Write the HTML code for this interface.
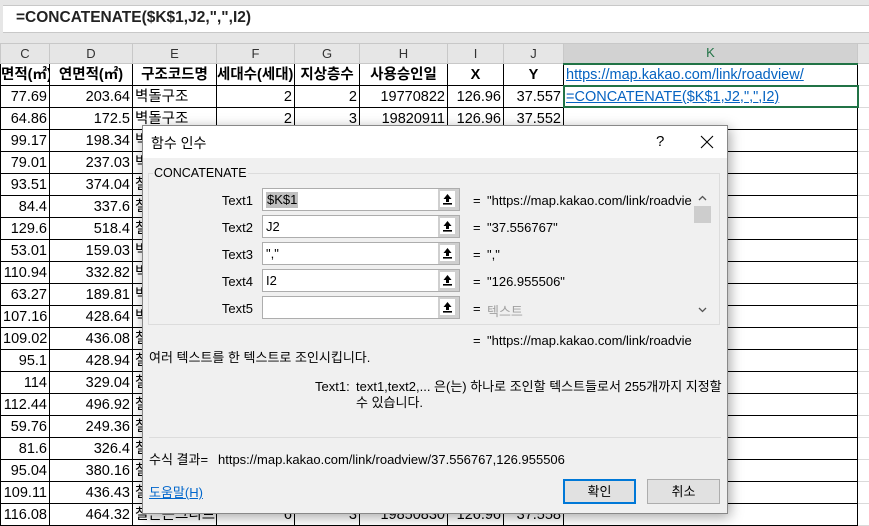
<!DOCTYPE html>
<html><head><meta charset="utf-8"><style>
*{margin:0;padding:0;box-sizing:border-box}
body{width:869px;height:521px;overflow:hidden;background:#fff;position:relative;font-family:"Liberation Sans","Noto Sans CJK KR",sans-serif;color:#000}
.abs{position:absolute}
#fbar{left:0;top:0;width:869px;height:43px;background:#e6e6e6}
#fbox{left:3px;top:5px;width:866px;height:28px;background:#fff;border-top:1px solid #c8c8c8;border-bottom:1px solid #c8c8c8}
#ftxt{left:16px;top:9px;font-size:15.5px;font-weight:bold;color:#222}
table{position:absolute;left:0;top:43px;width:869px;border-collapse:collapse;table-layout:fixed}
td{height:22px;font-size:14.5px;white-space:nowrap;overflow:hidden;padding:0 2px;border:1px solid #000;line-height:20px}
tr.h td{height:20px;line-height:18px;background:#e6e6e6;border:1px solid #c8c8c8;text-align:center;font-size:13px;color:#333}
tr.h td.k{background:#d2d2d2;border-bottom:2px solid #217346;color:#217346}
td.r{text-align:right}
td.b{font-weight:bold;text-align:center}
td.g{border:1px solid #dadada;border-left:1px solid #000}
#sel{left:563px;top:85px;width:296px;height:23px;border:2px solid #217346}
#dlg{left:142px;top:125px;width:586px;height:389px;background:#f0f0f0;border:1px solid #888;box-shadow:2px 3px 12px rgba(0,0,0,.35)}
#title{left:0;top:0;width:584px;height:32px;background:#fff}
.t{position:absolute;font-size:13px;white-space:nowrap;line-height:16px}
.lab{position:absolute;font-size:13px;width:60px;text-align:right;left:50px}
.inp{position:absolute;left:119px;width:198px;height:23px;background:#fff;border:1px solid #adadad}
.btn{position:absolute;right:0;top:0;width:21px;height:21px;background:#cfcfcf;padding:2px}
.btn div{width:15px;height:16px;background:#fff}
.eq{position:absolute;left:330px;font-size:13px}
.val{position:absolute;left:344px;font-size:13px;white-space:nowrap}
</style></head><body>
<div class="abs" id="fbar"></div>
<div class="abs" id="fbox"></div>
<div class="abs" id="ftxt">=CONCATENATE($K$1,J2,",",I2)</div>
<table>
<colgroup><col style="width:49px"><col style="width:83px"><col style="width:84px"><col style="width:78px"><col style="width:65px"><col style="width:88px"><col style="width:56px"><col style="width:60px"><col style="width:294px"><col style="width:12px"></colgroup>
<tr class="h"><td>C</td><td>D</td><td>E</td><td>F</td><td>G</td><td>H</td><td>I</td><td>J</td><td class="k">K</td><td></td></tr>
<tr><td class="b" style="text-align:right;padding:0">면적(㎡)</td><td class="b">연면적(㎡)</td><td class="b">구조코드명</td><td class="b" style="text-align:left;padding:0">세대수(세대)</td><td class="b">지상층수</td><td class="b">사용승인일</td><td class="b">X</td><td class="b">Y</td><td style="color:#0563c1;text-decoration:underline">https://map.kakao.com/link/roadview/</td><td class="g"></td></tr>
<tr><td class="r">77.69</td><td class="r">203.64</td><td>벽돌구조</td><td class="r">2</td><td class="r">2</td><td class="r">19770822</td><td class="r">126.96</td><td class="r">37.557</td><td style="color:#0563c1;text-decoration:underline">=CONCATENATE($K$1,J2,",",I2)</td><td class="g"></td></tr>
<tr><td class="r">64.86</td><td class="r">172.5</td><td>벽돌구조</td><td class="r">2</td><td class="r">3</td><td class="r">19820911</td><td class="r">126.96</td><td class="r">37.552</td><td></td><td class="g"></td></tr>
<tr><td class="r">99.17</td><td class="r">198.34</td><td>벽돌구조</td><td></td><td></td><td></td><td></td><td></td><td></td><td class="g"></td></tr>
<tr><td class="r">79.01</td><td class="r">237.03</td><td>벽돌구조</td><td></td><td></td><td></td><td></td><td></td><td></td><td class="g"></td></tr>
<tr><td class="r">93.51</td><td class="r">374.04</td><td>철근콘크리트</td><td></td><td></td><td></td><td></td><td></td><td></td><td class="g"></td></tr>
<tr><td class="r">84.4</td><td class="r">337.6</td><td>철근콘크리트</td><td></td><td></td><td></td><td></td><td></td><td></td><td class="g"></td></tr>
<tr><td class="r">129.6</td><td class="r">518.4</td><td>철근콘크리트</td><td></td><td></td><td></td><td></td><td></td><td></td><td class="g"></td></tr>
<tr><td class="r">53.01</td><td class="r">159.03</td><td>벽돌구조</td><td></td><td></td><td></td><td></td><td></td><td></td><td class="g"></td></tr>
<tr><td class="r">110.94</td><td class="r">332.82</td><td>벽돌구조</td><td></td><td></td><td></td><td></td><td></td><td></td><td class="g"></td></tr>
<tr><td class="r">63.27</td><td class="r">189.81</td><td>벽돌구조</td><td></td><td></td><td></td><td></td><td></td><td></td><td class="g"></td></tr>
<tr><td class="r">107.16</td><td class="r">428.64</td><td>벽돌구조</td><td></td><td></td><td></td><td></td><td></td><td></td><td class="g"></td></tr>
<tr><td class="r">109.02</td><td class="r">436.08</td><td>철근콘크리트</td><td></td><td></td><td></td><td></td><td></td><td></td><td class="g"></td></tr>
<tr><td class="r">95.1</td><td class="r">428.94</td><td>철근콘크리트</td><td></td><td></td><td></td><td></td><td></td><td></td><td class="g"></td></tr>
<tr><td class="r">114</td><td class="r">329.04</td><td>철근콘크리트</td><td></td><td></td><td></td><td></td><td></td><td></td><td class="g"></td></tr>
<tr><td class="r">112.44</td><td class="r">496.92</td><td>철근콘크리트</td><td></td><td></td><td></td><td></td><td></td><td></td><td class="g"></td></tr>
<tr><td class="r">59.76</td><td class="r">249.36</td><td>철근콘크리트</td><td></td><td></td><td></td><td></td><td></td><td></td><td class="g"></td></tr>
<tr><td class="r">81.6</td><td class="r">326.4</td><td>철근콘크리트</td><td></td><td></td><td></td><td></td><td></td><td></td><td class="g"></td></tr>
<tr><td class="r">95.04</td><td class="r">380.16</td><td>철근콘크리트</td><td></td><td></td><td></td><td></td><td></td><td></td><td class="g"></td></tr>
<tr><td class="r">109.11</td><td class="r">436.43</td><td>철근콘크리트</td><td></td><td></td><td></td><td></td><td></td><td></td><td class="g"></td></tr>
<tr><td class="r">116.08</td><td class="r">464.32</td><td>철근콘크리트</td><td class="r">6</td><td class="r">3</td><td class="r">19850830</td><td class="r">126.96</td><td class="r">37.558</td><td></td><td class="g"></td></tr>
</table>
<div class="abs" id="sel"></div>
<svg width="0" height="0" style="position:absolute"><defs><symbol id="ar" viewBox="0 0 15 16"><path d="M7.5 3L3.5 8H6V11H9V8H11.5Z" fill="#000"/><rect x="3" y="12" width="9" height="1.6" fill="#000"/></symbol></defs></svg>
<div class="abs" id="dlg">
 <div class="abs" id="title"></div>
 <div class="t" style="left:8px;top:9px;font-size:14px">함수 인수</div>
 <div class="t" style="left:513px;top:8px;font-size:15px">?</div>
 <svg class="abs" style="left:557px;top:9px" width="14" height="14" viewBox="0 0 14 14"><path d="M1 1L13 13M13 1L1 13" stroke="#000" stroke-width="1.1"/></svg>
 <div class="abs" style="left:5px;top:47px;width:572px;height:152px;border:1px solid #dcdcdc"></div>
 <div class="t" style="left:10px;top:39px;background:#f0f0f0;padding:0 1px;font-size:12.5px">CONCATENATE</div>

 <div class="lab" style="top:67px">Text1</div>
 <div class="inp" style="top:62px"><span class="t" style="left:3px;top:3px;background:#c0c0c0;padding:0 1px">$K$1</span><div class="btn"><div><svg width="15" height="16"><use href="#ar"/></svg></div></div></div>
 <div class="eq" style="top:67px">=</div><div class="val" style="top:67px">"https://map.kakao.com/link/roadvie</div>

 <div class="lab" style="top:94px">Text2</div>
 <div class="inp" style="top:89px"><span class="t" style="left:3px;top:3px">J2</span><div class="btn"><div><svg width="15" height="16"><use href="#ar"/></svg></div></div></div>
 <div class="eq" style="top:94px">=</div><div class="val" style="top:94px">"37.556767"</div>

 <div class="lab" style="top:121px">Text3</div>
 <div class="inp" style="top:116px"><span class="t" style="left:3px;top:3px">","</span><div class="btn"><div><svg width="15" height="16"><use href="#ar"/></svg></div></div></div>
 <div class="eq" style="top:121px">=</div><div class="val" style="top:121px">","</div>

 <div class="lab" style="top:148px">Text4</div>
 <div class="inp" style="top:143px"><span class="t" style="left:3px;top:3px">I2</span><div class="btn"><div><svg width="15" height="16"><use href="#ar"/></svg></div></div></div>
 <div class="eq" style="top:148px">=</div><div class="val" style="top:148px">"126.955506"</div>

 <div class="lab" style="top:175px">Text5</div>
 <div class="inp" style="top:170px"><div class="btn"><div><svg width="15" height="16"><use href="#ar"/></svg></div></div></div>
 <div class="eq" style="top:175px">=</div><div class="val" style="top:175px;color:#a0a0a0">텍스트</div>

 <div class="abs" style="left:550px;top:63px;width:18px;height:125px;background:#f0f0f0"></div>
 <svg class="abs" style="left:555px;top:69px" width="9" height="6" viewBox="0 0 9 6"><path d="M1 5L4.5 1.5L8 5" stroke="#555" stroke-width="1.3" fill="none"/></svg>
 <div class="abs" style="left:551px;top:80px;width:17px;height:17px;background:#cdcdcd"></div>
 <svg class="abs" style="left:555px;top:181px" width="9" height="6" viewBox="0 0 9 6"><path d="M1 1L4.5 4.5L8 1" stroke="#555" stroke-width="1.3" fill="none"/></svg>

 <div class="eq" style="top:207px">=</div><div class="val" style="top:207px">"https://map.kakao.com/link/roadvie</div>
 <div class="t" style="left:6px;top:224px">여러 텍스트를 한 텍스트로 조인시킵니다.</div>
 <div class="t" style="left:172px;top:253px">Text1:</div>
 <div class="t" style="left:213px;top:253px">text1,text2,... 은(는) 하나로 조인할 텍스트들로서 255개까지 지정할</div>
 <div class="t" style="left:213px;top:269px">수 있습니다.</div>
 <div class="abs" style="left:6px;top:311px;width:572px;height:1px;background:#dcdcdc"></div>
 <div class="t" style="left:6px;top:326px">수식 결과=</div>
 <div class="t" style="left:75px;top:326px">https://map.kakao.com/link/roadview/37.556767,126.955506</div>
 <div class="t" style="left:6px;top:359px;color:#0066cc;text-decoration:underline">도움말(H)</div>
 <div class="abs" style="left:420px;top:353px;width:73px;height:25px;background:#e1e1e1;border:2px solid #0078d7;font-size:13px;text-align:center;line-height:21px">확인</div>
 <div class="abs" style="left:504px;top:353px;width:73px;height:25px;background:#e1e1e1;border:1px solid #adadad;font-size:13px;text-align:center;line-height:23px">취소</div>
</div>
</body></html>
